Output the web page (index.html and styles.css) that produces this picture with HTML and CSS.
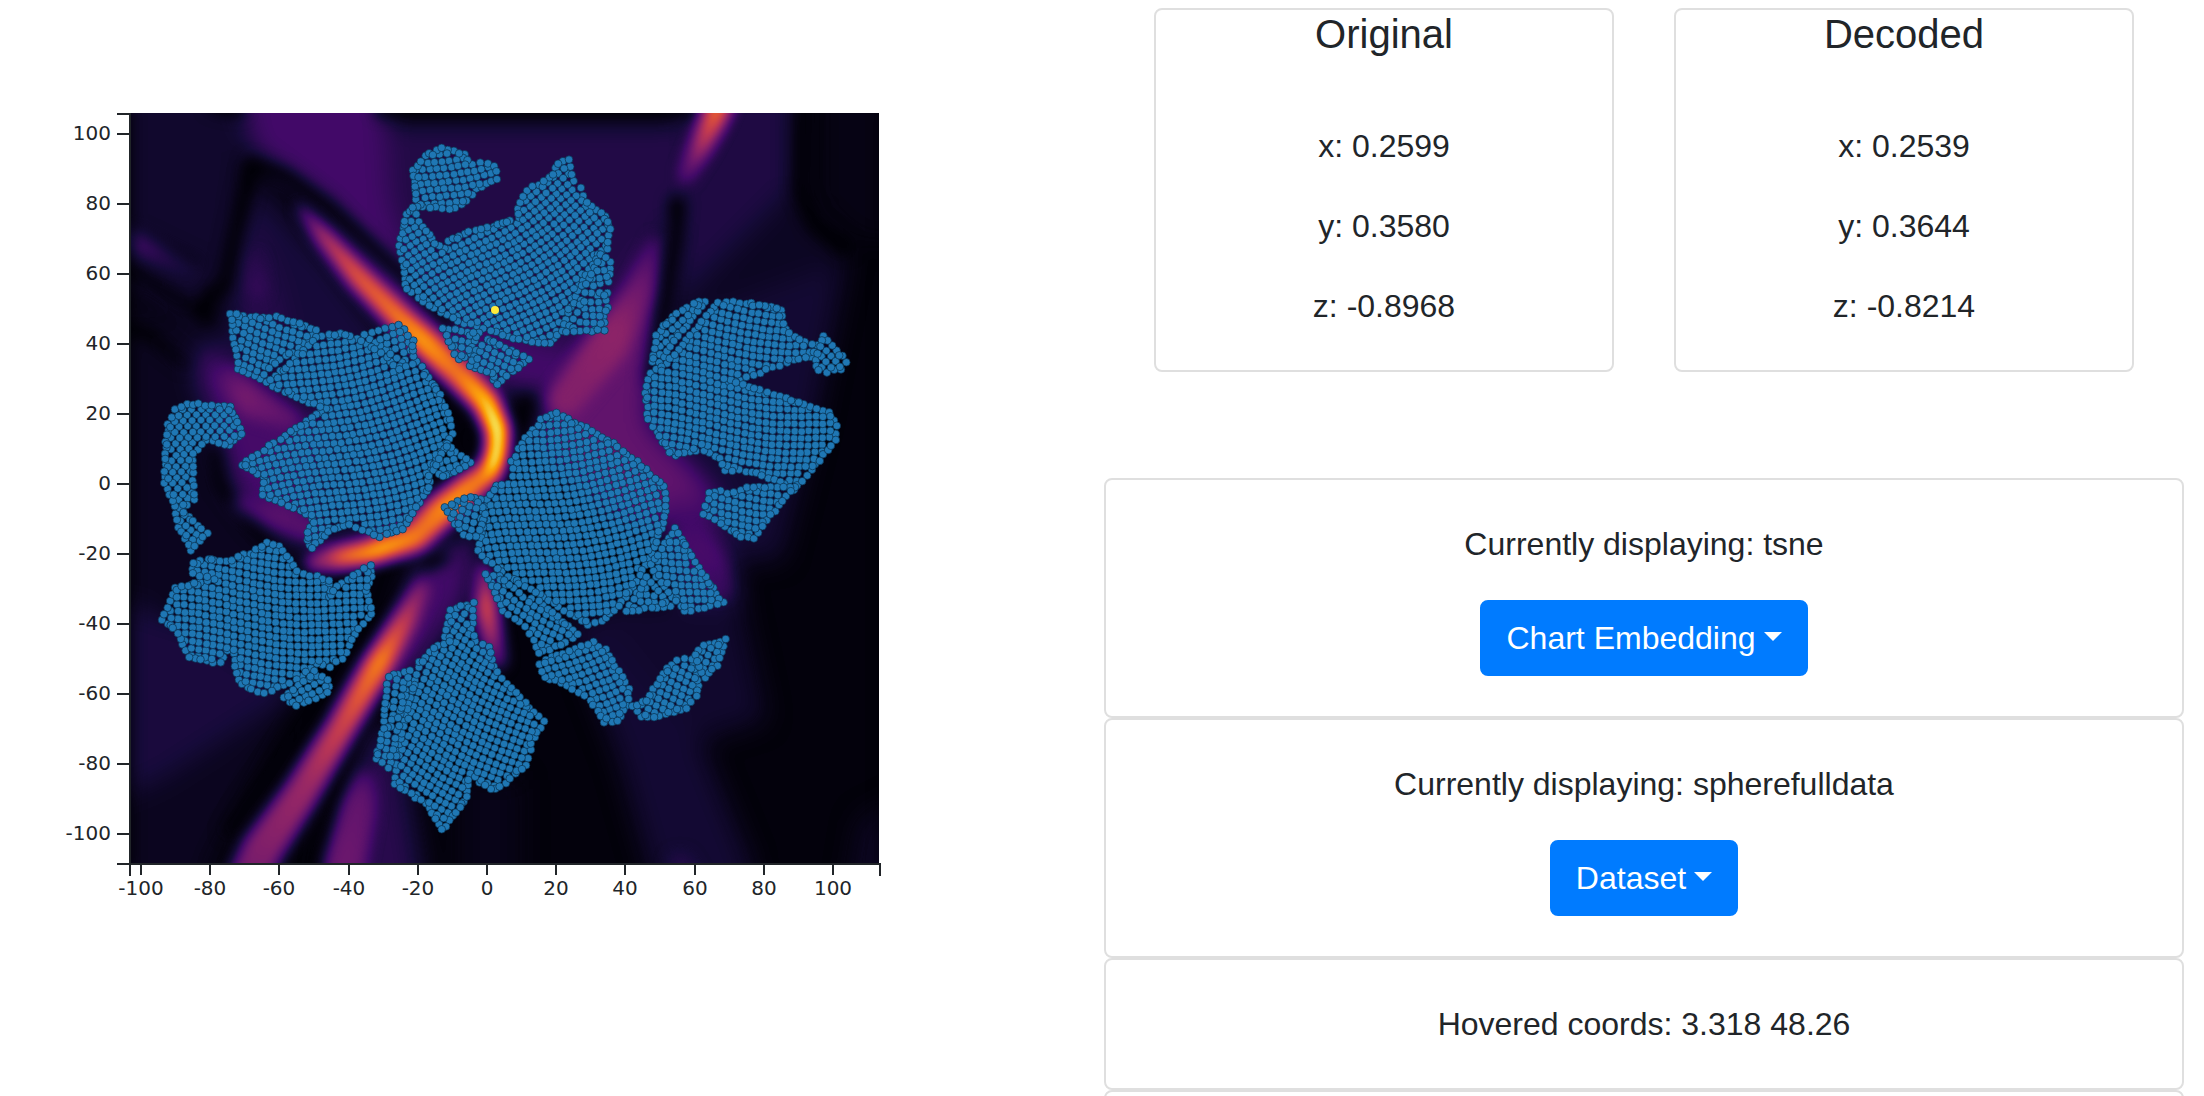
FILE: index.html
```html
<!DOCTYPE html>
<html lang="en">
<head>
<meta charset="utf-8">
<title>Embedding explorer</title>
<link rel="stylesheet" href="styles.css">
</head>
<body>
<main class="layout">
  <section class="chart" aria-label="Embedding chart">
    <svg class="chart-svg" viewBox="0 0 1102 960" role="img" aria-label="Scatter plot over heat map">
      <defs>
        <clipPath id="plot-clip"><rect x="131" y="113" width="748" height="751"/></clipPath>
        <filter id="soft" filterUnits="userSpaceOnUse" x="60" y="40" width="900" height="900" color-interpolation-filters="sRGB"><feGaussianBlur stdDeviation="13"/></filter>
        <filter id="fine" filterUnits="userSpaceOnUse" x="60" y="40" width="900" height="900" color-interpolation-filters="sRGB"><feGaussianBlur stdDeviation="7"/></filter>
        <filter id="inferno" filterUnits="userSpaceOnUse" x="60" y="40" width="900" height="900" color-interpolation-filters="sRGB">
          <feComponentTransfer>
            <feFuncR type="table" tableValues="0 .086 .259 .416 .576 .737 .867 .953 .988 .965 .988"/>
            <feFuncG type="table" tableValues="0 .043 .039 .090 .149 .216 .318 .471 .647 .843 1"/>
            <feFuncB type="table" tableValues=".016 .224 .408 .431 .404 .329 .227 .098 .039 .275 .643"/>
          </feComponentTransfer>
        </filter>
      </defs>
      <g clip-path="url(#plot-clip)">
        <g filter="url(#inferno)">
          <rect x="60" y="40" width="900" height="900" fill="#040404"/>
          <g id="regions" filter="url(#soft)"></g>
          <g id="ridges" filter="url(#fine)"></g>
        </g>
      </g>
      <g id="dots" class="dots"></g>
      <circle class="dot-active" cx="495" cy="310" r="4"/>
      <g id="axes" class="axes"></g>
    </svg>
  </section>

  <section class="panel">
    <div class="compare">
      <article class="card">
        <h5 class="card-title">Original</h5>
        <div class="card-body">
          <p>x: 0.2599</p>
          <p>y: 0.3580</p>
          <p>z: -0.8968</p>
        </div>
      </article>
      <article class="card">
        <h5 class="card-title">Decoded</h5>
        <div class="card-body">
          <p>x: 0.2539</p>
          <p>y: 0.3644</p>
          <p>z: -0.8214</p>
        </div>
      </article>
    </div>
    <div class="stack">
      <div class="card card-body">
        <p>Currently displaying: tsne</p>
        <button type="button" class="btn">Chart Embedding</button>
      </div>
      <div class="card card-body">
        <p>Currently displaying: spherefulldata</p>
        <button type="button" class="btn">Dataset</button>
      </div>
      <div class="card card-body">
        <p>Hovered coords: 3.318 48.26</p>
      </div>
      <div class="card card-body"></div>
    </div>
  </section>
</main>
<script src="chart.js"></script>
</body>
</html>
```
FILE: styles.css
```css
*,
*::before,
*::after {
  box-sizing: border-box;
}

body {
  margin: 0;
  height: 100vh;
  overflow: hidden;
  background: #fff;
  color: #212529;
  font: 32px/48px "Liberation Sans", Arial, sans-serif;
}

.layout {
  display: grid;
  grid-template-columns: 1fr 1fr;
}

.chart-svg {
  display: block;
  width: 100%;
}

.dots {
  fill: #1f77b4;
  stroke: #0a2f4c;
  stroke-width: 0.7px;
}

.dot-active {
  fill: #ffeb3b;
}

.axes {
  font: 20px "DejaVu Sans", sans-serif;
  fill: #212529;
}

.axes path {
  fill: none;
  stroke: #212529;
  stroke-width: 2px;
}

.axis-x text {
  text-anchor: middle;
}

.axis-y text {
  text-anchor: end;
}

.panel {
  padding: 8px 20px 0 2px;
  text-align: center;
}

.compare {
  display: grid;
  grid-template-columns: 1fr 1fr;
  gap: 60px;
  padding: 0 50px;
  margin-bottom: 106px;
}

.card {
  border: 2px solid #dfdfdf;
  border-radius: 8px;
}

.card-title {
  margin: 0 0 24px;
  font-size: 40px;
  line-height: 48px;
  font-weight: 400;
}

.card-body {
  padding: 40px;
}

.card-body p {
  margin: 0 0 32px;
}

.card-body p:last-child {
  margin-bottom: 0;
}

.btn {
  display: inline-flex;
  align-items: center;
  gap: 8px;
  padding: 12px 24px;
  border: 2px solid #007bff;
  border-radius: 8px;
  background: #007bff;
  color: #fff;
  font: inherit;
  vertical-align: top;
}

.btn::after {
  content: "";
  margin-bottom: 4px;
  border: 9px solid transparent;
  border-top-color: #fff;
  border-bottom: 0;
}
```
FILE: chart.js
```js
const NS = 'http://www.w3.org/2000/svg';

function add(parent, name, attrs, text) {
  const el = document.createElementNS(NS, name);
  for (const key in attrs) el.setAttribute(key, attrs[key]);
  if (text !== undefined) el.textContent = text;
  parent.appendChild(el);
  return el;
}

let seed = 7;
function random() {
  seed = (seed * 1664525 + 1013904223) % 4294967296;
  return seed / 4294967296;
}

function gray(v) {
  const c = Math.round(v * 255);
  return `rgb(${c},${c},${c})`;
}

// Broad areas of the heat map: [level, outline]
const regions = [
  [0.08, '60,40 240,40 245,160 225,280 205,320 130,290 60,290'],
  [0.05, '60,300 300,330 330,560 130,620 60,600'],
  [0.11, '60,590 190,620 300,690 160,790 60,830'],
  [0.05, '60,820 160,780 300,690 210,864 200,940 60,940'],
  [0.2, '232,40 375,40 400,180 430,320 400,300 330,210 250,150'],
  [0.13, '385,122 700,122 680,210 660,240 630,330 560,400 430,320 390,200'],
  [0.2, '400,240 460,310 560,350 600,330 560,400 500,390 430,340'],
  [0.12, '680,90 795,90 795,220 760,260 690,350 670,330'],
  [0.06, '690,290 790,190 850,260 660,340'],
  [0.09, '660,330 845,262 815,420 780,560 700,560'],
  [0.03, '820,40 960,40 960,240 860,240 820,200'],
  [0.1, '250,175 330,260 420,380 420,540 290,540 245,440 225,330'],
  [0.14, '245,200 275,280 290,340 230,330'],
  [0.21, '205,340 300,420 330,420 300,540 240,500 220,440 195,370'],
  [0.28, '660,240 655,330 650,420 720,500 700,530 620,520 530,440 560,390'],
  [0.2, '660,500 710,500 740,600 740,640 680,600'],
  [0.08, '600,600 740,600 765,720 700,740 590,640'],
  [0.09, '560,600 620,640 700,740 750,864 750,940 670,940 620,760'],
  [0.06, '860,820 960,770 960,940 840,940'],
  [0.2, '420,560 480,530 470,600 410,680 380,680'],
  [0.14, '375,720 400,740 420,864 420,940 320,940 330,840'],
  [0.04, '460,780 520,780 520,940 460,940']
];

// Ridges and valleys, drawn in order: points are [x, y, width, level]
const ridges = [
  [[215, 104, 12, 0], [237, 110, 10, 0]],
  [[380, 110, 8, 0], [690, 110, 8, 0]],
  [[252, 165, 12, 0], [234, 240, 8, 0], [225, 285, 8, 0], [208, 298, 12, 0], [206, 318, 10, 0]],
  [[250, 163, 8, 0], [285, 175, 8, 0], [330, 208, 8, 0], [400, 272, 8, 0], [450, 325, 8, 0]],
  [[120, 225, 6, 0.03], [200, 262, 4, 0.05]],
  [[120, 235, 18, 0.23], [150, 250, 16, 0.18], [190, 272, 8, 0.11]],
  [[120, 262, 6, 0], [180, 300, 6, 0.02], [205, 315, 8, 0]],
  [[120, 325, 8, 0], [150, 335, 8, 0], [185, 365, 4, 0.03]],
  [[255, 260, 10, 0.14], [257, 290, 14, 0.17]],
  [[230, 380, 20, 0.24], [252, 402, 26, 0.33], [290, 420, 14, 0.28]],
  [[215, 450, 6, 0], [220, 485, 6, 0], [250, 525, 6, 0.01], [290, 570, 6, 0.02]],
  [[245, 503, 16, 0.2], [285, 518, 22, 0.26], [310, 530, 20, 0.25]],
  [[803, 90, 8, 0], [800, 190, 8, 0], [815, 225, 10, 0], [845, 247, 12, 0]],
  [[677, 204, 14, 0], [677, 230, 8, 0], [662, 320, 7, 0], [650, 380, 6, 0.02]],
  [[655, 240, 4, 0.22], [640, 290, 20, 0.3], [608, 345, 36, 0.39], [565, 400, 30, 0.36]],
  [[526, 400, 10, 0], [522, 430, 6, 0]],
  [[724, 92, 21, 0.68], [713, 120, 19, 0.66], [700, 148, 15, 0.5], [686, 175, 10, 0.28]],
  [[466, 432, 12, 0.01], [470, 448, 12, 0.01]],
  [[425, 563, 8, 0], [442, 558, 8, 0]],
  [[378, 696, 4, 0], [345, 755, 6, 0], [315, 864, 10, 0], [310, 900, 10, 0]],
  [[350, 640, 8, 0.01], [290, 740, 10, 0.01], [230, 830, 12, 0.01]],
  [[300, 208, 2, 0.28], [325, 238, 14, 0.46], [360, 278, 20, 0.6], [400, 318, 22, 0.68], [430, 347, 24, 0.78], [465, 380, 24, 0.68], [486, 402, 21, 0.82], [498, 430, 17, 1], [497, 452, 16, 1], [490, 472, 18, 0.9], [470, 487, 24, 0.7], [440, 512, 27, 0.75], [415, 537, 24, 0.68], [370, 552, 20, 0.8], [335, 558, 19, 0.66], [315, 562, 14, 0.4]],
  [[497, 440, 14, 1], [495, 462, 12, 1]],
  [[422, 588, 12, 0.34], [405, 620, 19, 0.48], [375, 670, 24, 0.72], [340, 730, 24, 0.56], [300, 795, 30, 0.42], [262, 850, 36, 0.37], [240, 900, 38, 0.32]],
  [[365, 780, 16, 0.2], [358, 810, 30, 0.28], [345, 864, 36, 0.3], [340, 900, 36, 0.3]],
  [[484, 570, 10, 0.3], [487, 612, 18, 0.58], [492, 640, 16, 0.46], [498, 660, 12, 0.28]],
  [[692, 540, 22, 0.21], [712, 565, 22, 0.22], [720, 590, 12, 0.18]],
  [[680, 864, 20, 0.13], [695, 900, 30, 0.14]],
  [[886, 112, 6, 0], [886, 864, 6, 0]],
  [[127, 112, 6, 0], [127, 864, 6, 0]]
];

// Point clouds: outline in thirds of a unit from an origin, with grid angle
const clusters = [
  [380, 120, -12, '100,148 150,97 185,83 255,103 285,150 303,128 345,138 350,175 290,208 245,255 208,268 110,258 105,200'],
  [380, 120, -32, '100,262 78,285 60,375 70,440 80,508 180,577 235,603 330,630 400,658 510,670 545,630 610,480 655,400 680,385 690,325 675,290 620,245 600,205 580,185 565,120 535,132 510,175 440,210 415,265 415,295 388,300 340,322 268,332 205,365 195,385 165,372 150,345 115,305'],
  [380, 120, -10, '660,405 690,425 685,485 640,497 620,495 635,460'],
  [380, 120, 0, '615,520 680,520 682,560 670,590 675,630 560,635 590,575'],
  [380, 120, 10, '190,625 295,640 270,700 235,720'],
  [380, 120, 25, '322,658 445,715 350,795 335,760 270,740 290,690'],
  [620, 280, -42, '235,62 255,65 175,165 120,245 95,245 110,165 155,112'],
  [620, 280, 7, '270,95 295,70 340,65 435,75 485,90 490,130 505,160 540,178 590,198 575,230 520,240 440,270 360,298 330,305 440,335 630,398 650,440 645,480 600,540 520,632 480,605 410,580 360,570 315,573 300,535 250,510 170,525 150,515 110,455 85,420 78,340 90,280 140,250 200,180'],
  [620, 280, 45, '610,165 665,225 680,248 665,268 620,275 595,270 585,240 600,200'],
  [620, 280, 8, '270,640 300,630 320,640 380,622 510,622 510,635 440,720 400,773 365,773 300,730 250,700'],
  [470, 100, -9, '125,1085 155,1030 215,960 260,940 330,975 430,1030 500,1085 580,1160 590,1200 580,1270 545,1360 490,1460 445,1520 395,1565 355,1575 300,1540 200,1480 130,1440 50,1380 25,1350 40,1280 50,1200 80,1155 130,1150'],
  [470, 480, 20, '-75,80 0,50 35,60 45,100 20,170 -20,165 -45,130'],
  [470, 480, 30, '45,280 90,290 160,350 205,365 260,410 325,465 270,495 205,520 190,480 165,440 100,390'],
  [470, 480, -22, '225,540 370,485 405,510 475,625 475,660 445,725 405,725 360,660 290,615 225,590 210,555'],
  [470, 480, 25, '485,680 530,660 580,580 620,540 665,535 685,600 680,650 650,685 550,712 515,710'],
  [470, 480, 25, '675,525 700,495 770,480 740,555 705,592 690,560'],
  [470, 480, 0, '617,145 665,230 760,370 645,395 560,290 545,255'],
  [470, 480, 0, '530,290 600,380 470,392'],
  [50, 480, 28, '1110,545 1150,505 1200,485 1185,470 1200,390 1270,370 1265,450 1275,485 1320,500 1330,560 1370,610 1480,725 1445,790 1430,855 1350,920 1320,930 1260,880 1250,950 1210,1010 1175,1050 1145,1000 1130,970 1035,915 1040,830 1060,740 1095,600'],
  [50, 480, 14, '1015,590 1080,572 1065,650 1045,715 1000,725 1010,650'],
  [50, 480, 14, '1000,745 1045,735 1015,865 980,835'],
  [50, 480, 5, '375,325 435,310 490,300 430,280 430,250 475,235 530,245 600,220 650,190 690,200 720,240 740,275 840,300 835,350 860,320 960,255 965,290 950,330 965,400 915,460 880,535 840,560 800,550 740,600 645,638 605,630 565,600 550,520 530,510 510,550 415,530 385,460 335,420'],
  [50, 480, -30, '700,655 795,575 835,600 835,640 740,675'],
  [50, 100, 18, '540,640 640,655 680,650 800,690 745,745 690,780 630,835 565,805'],
  [50, 100, -13, '650,850 720,790 800,710 870,700 935,720 1010,770 1040,810 1055,785 945,705 1045,675 1090,720 1090,770 1150,850 1195,940 1205,1000 1170,1060 1140,1110 1135,1160 1130,1170 1090,1240 1060,1285 990,1310 900,1275 850,1285 785,1345 770,1320 785,1260 770,1240 730,1225 640,1185 640,1130 575,1095 640,1050 740,985 830,925 740,895'],
  [50, 100, -20, '1190,1030 1260,1090 1180,1130 1150,1110'],
  [50, 100, 42, '375,930 410,910 540,920 575,1000 540,1035 470,1020 430,1060 430,1140 430,1200 390,1225 470,1300 425,1350 385,1280 375,1220 345,1150 345,1060 355,970']
];

const regionLayer = document.getElementById('regions');
for (const [level, points] of regions) {
  add(regionLayer, 'polygon', { points, fill: gray(level) });
}

const ridgeLayer = document.getElementById('ridges');
for (const line of ridges) {
  for (let i = 1; i < line.length; i++) {
    const [a, b] = [line[i - 1], line[i]];
    const steps = Math.ceil(Math.hypot(b[0] - a[0], b[1] - a[1]) / 2);
    for (let s = 0; s <= steps; s++) {
      const [x, y, w, v] = a.map((n, k) => n + (b[k] - n) * s / steps);
      add(ridgeLayer, 'circle', { cx: x.toFixed(1), cy: y.toFixed(1), r: (w / 2 + 2).toFixed(1), fill: gray(v) });
    }
  }
}

function inside(poly, x, y) {
  let hit = false;
  for (let i = 0, j = poly.length - 1; i < poly.length; j = i++) {
    const [xi, yi] = poly[i];
    const [xj, yj] = poly[j];
    if ((yi > y) !== (yj > y) && x < (xj - xi) * (y - yi) / (yj - yi) + xi) hit = !hit;
  }
  return hit;
}

const dotLayer = document.getElementById('dots');
const STEP = 7.1;
for (const [ox, oy, degrees, outline] of clusters) {
  const poly = outline.split(' ').map(p => {
    const [x, y] = p.split(',').map(Number);
    return [ox + x / 3, oy + y / 3];
  });
  const edge = [];
  poly.forEach((a, i) => {
    const b = poly[(i + 1) % poly.length];
    const n = Math.max(1, Math.round(Math.hypot(b[0] - a[0], b[1] - a[1]) / 6.4));
    for (let s = 0; s < n; s++) {
      edge.push([a[0] + (b[0] - a[0]) * s / n + random() * 2 - 1, a[1] + (b[1] - a[1]) * s / n + random() * 2 - 1]);
    }
  });
  const cx = poly.reduce((t, p) => t + p[0], 0) / poly.length;
  const cy = poly.reduce((t, p) => t + p[1], 0) / poly.length;
  const angle = degrees * Math.PI / 180;
  const dots = [];
  for (let i = -25; i <= 25; i++) {
    for (let j = -25; j <= 25; j++) {
      const u = i * STEP + 5 * Math.sin(j * STEP / 38);
      const v = j * STEP + 5 * Math.sin(i * STEP / 34 + 1);
      const x = cx + u * Math.cos(angle) - v * Math.sin(angle) + random() - 0.5;
      const y = cy + u * Math.sin(angle) + v * Math.cos(angle) + random() - 0.5;
      if (inside(poly, x, y) && edge.every(e => Math.hypot(e[0] - x, e[1] - y) > 2.6)) dots.push([x, y]);
    }
  }
  const all = dots.concat(edge).map(p => [random(), p]).sort((a, b) => a[0] - b[0]);
  for (const [, [x, y]] of all) {
    add(dotLayer, 'circle', { cx: x.toFixed(1), cy: y.toFixed(1), r: 3.8 });
  }
}

const axes = document.getElementById('axes');
const axisX = add(axes, 'g', { class: 'axis-x' });
const axisY = add(axes, 'g', { class: 'axis-y' });
add(axisX, 'path', { d: 'M130 876V864H880V876' });
add(axisY, 'path', { d: 'M117 114H130V864H117' });
for (let n = -100; n <= 100; n += 20) {
  const x = Math.round(487 + n * 3.46);
  const y = 484 - n * 3.5;
  add(axisX, 'path', { d: `M${x} 864V875` });
  add(axisX, 'text', { x, y: 895 }, n);
  add(axisY, 'path', { d: `M117 ${y}H130` });
  add(axisY, 'text', { x: 111, y: y + 6 }, n);
}
```
